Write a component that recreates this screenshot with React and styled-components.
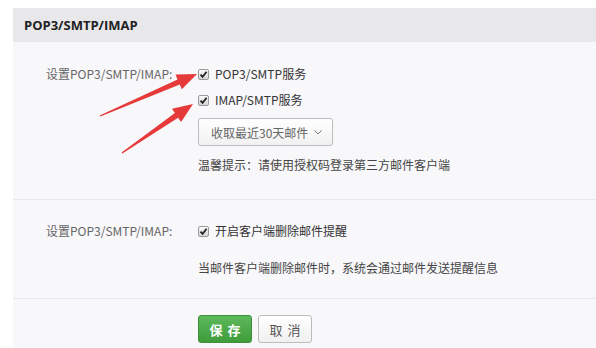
import React from "react";
import styled, { createGlobalStyle } from "styled-components";

const GlobalStyle = createGlobalStyle`
  body {
    margin: 0;
    background: #ffffff;
    font-family: "Noto Sans CJK SC", "Noto Sans", sans-serif;
    font-size: 12px;
    color: #333;
  }
`;

const Page = styled.div`
  position: relative;
  padding: 8px 0 0 13px;
  height: 340px;
  overflow: hidden;
`;

const Panel = styled.div`
  background: #f8f7fa;
  height: 100%;
`;

const Header = styled.div`
  height: 34px;
  line-height: 34px;
  padding-left: 11px;
  background: #e8e7ea;
  font-size: 13px;
  font-weight: bold;
  color: #222;
  font-family: "Open Sans", "Noto Sans CJK SC", sans-serif;
`;

const Section = styled.div`
  padding: ${(p) => p.pad};
  border-bottom: 1px solid #e9e8eb;
`;

const Row = styled.div`
  display: grid;
  grid-template-columns: 152px 1fr;
  padding-left: 33px;
`;

const Label = styled.div`
  color: #666;
  line-height: 20px;
`;

const Options = styled.div`
  display: flex;
  flex-direction: column;
  align-items: flex-start;
  gap: ${(p) => p.gap || 6}px;
`;

const Check = styled.label`
  display: flex;
  align-items: center;
  line-height: 20px;
  color: #333;
`;

const Box = styled.span`
  width: 11px;
  height: 11px;
  box-sizing: border-box;
  margin-right: 6px;
  border: 1px solid #9a9a9a;
  border-radius: 2px;
  background: linear-gradient(#fafafa, #d6d6d6);
  display: flex;
  align-items: center;
  justify-content: center;
`;

const Select = styled.div`
  margin-top: 2px;
  height: 28px;
  box-sizing: border-box;
  padding: 0 10px 0 12px;
  display: flex;
  align-items: center;
  gap: 6px;
  border: 1px solid #bdbdbd;
  border-radius: 3px;
  background: linear-gradient(#ffffff, #f1f1f1);
  color: #666;
`;

const Hint = styled.div`
  margin-top: 3px;
  line-height: 20px;
  color: #444;
`;

const Note = styled.div`
  line-height: 20px;
  color: #444;
`;

const Footer = styled.div`
  padding: 16px 0 0 185px;
  display: flex;
  gap: 6px;
`;

const Button = styled.button`
  width: 54px;
  height: 28px;
  border-radius: 3px;
  font-family: "Noto Sans CJK SC", sans-serif;
  font-size: 13px;
  letter-spacing: 5px;
  padding: 0 0 0 5px;
  border: 1px solid ${(p) => (p.primary ? "#3d8f38" : "#bcbcbc")};
  background: ${(p) =>
    p.primary ? "linear-gradient(#5cb85a, #3f9c3b)" : "linear-gradient(#ffffff, #f0f0f0)"};
  color: ${(p) => (p.primary ? "#fff" : "#555")};
  font-weight: ${(p) => (p.primary ? "bold" : "normal")};
`;

const Overlay = styled.svg`
  position: absolute;
  left: 0;
  top: 0;
  pointer-events: none;
`;

const CheckIcon = () => (
  <svg width="9" height="9" viewBox="0 0 9 9">
    <path d="M1.5 4.6 L3.6 6.8 L7.6 1.8" fill="none" stroke="#222" strokeWidth="1.8" />
  </svg>
);

const Checkbox = ({ children }) => (
  <Check>
    <Box>
      <CheckIcon />
    </Box>
    {children}
  </Check>
);

// tapered annotation arrow, from tail (tx, ty) to tip (hx, hy)
const arrowPoints = (tx, ty, hx, hy) => {
  const dx = hx - tx;
  const dy = hy - ty;
  const len = Math.hypot(dx, dy);
  const ux = dx / len;
  const uy = dy / len;
  const nx = -uy;
  const ny = ux;
  const bx = hx - ux * 20;
  const by = hy - uy * 20;
  const pts = [
    [tx + nx * 0.7, ty + ny * 0.7],
    [bx + nx * 2.8, by + ny * 2.8],
    [bx + nx * 8, by + ny * 8],
    [hx, hy],
    [bx - nx * 8, by - ny * 8],
    [bx - nx * 2.8, by - ny * 2.8],
    [tx - nx * 0.7, ty - ny * 0.7],
  ];
  return pts.map((p) => p.map((v) => v.toFixed(1)).join(",")).join(" ");
};

export default function App() {
  return (
    <>
      <GlobalStyle />
      <Page>
        <Panel>
          <Header>POP3/SMTP/IMAP</Header>
          <Section pad="22px 0 24px">
            <Row>
              <Label>设置POP3/SMTP/IMAP:</Label>
              <Options>
                <Checkbox>POP3/SMTP服务</Checkbox>
                <Checkbox>IMAP/SMTP服务</Checkbox>
                <Select>
                  收取最近30天邮件
                  <svg width="8" height="5" viewBox="0 0 8 5">
                    <path d="M0.5 0.5 L4 4 L7.5 0.5" fill="none" stroke="#777" strokeWidth="1" />
                  </svg>
                </Select>
                <Hint>温馨提示：请使用授权码登录第三方邮件客户端</Hint>
              </Options>
            </Row>
          </Section>
          <Section pad="21px 0 20px">
            <Row>
              <Label>设置POP3/SMTP/IMAP:</Label>
              <Options gap={17}>
                <Checkbox>开启客户端删除邮件提醒</Checkbox>
                <Note>当邮件客户端删除邮件时，系统会通过邮件发送提醒信息</Note>
              </Options>
            </Row>
          </Section>
          <Footer>
            <Button primary>保存</Button>
            <Button>取消</Button>
          </Footer>
        </Panel>
        <Overlay width="596" height="348">
          <polygon points={arrowPoints(100, 116, 197, 74)} fill="#e63a3a" />
          <polygon points={arrowPoints(122, 153, 193, 104)} fill="#e63a3a" />
        </Overlay>
      </Page>
    </>
  );
}
